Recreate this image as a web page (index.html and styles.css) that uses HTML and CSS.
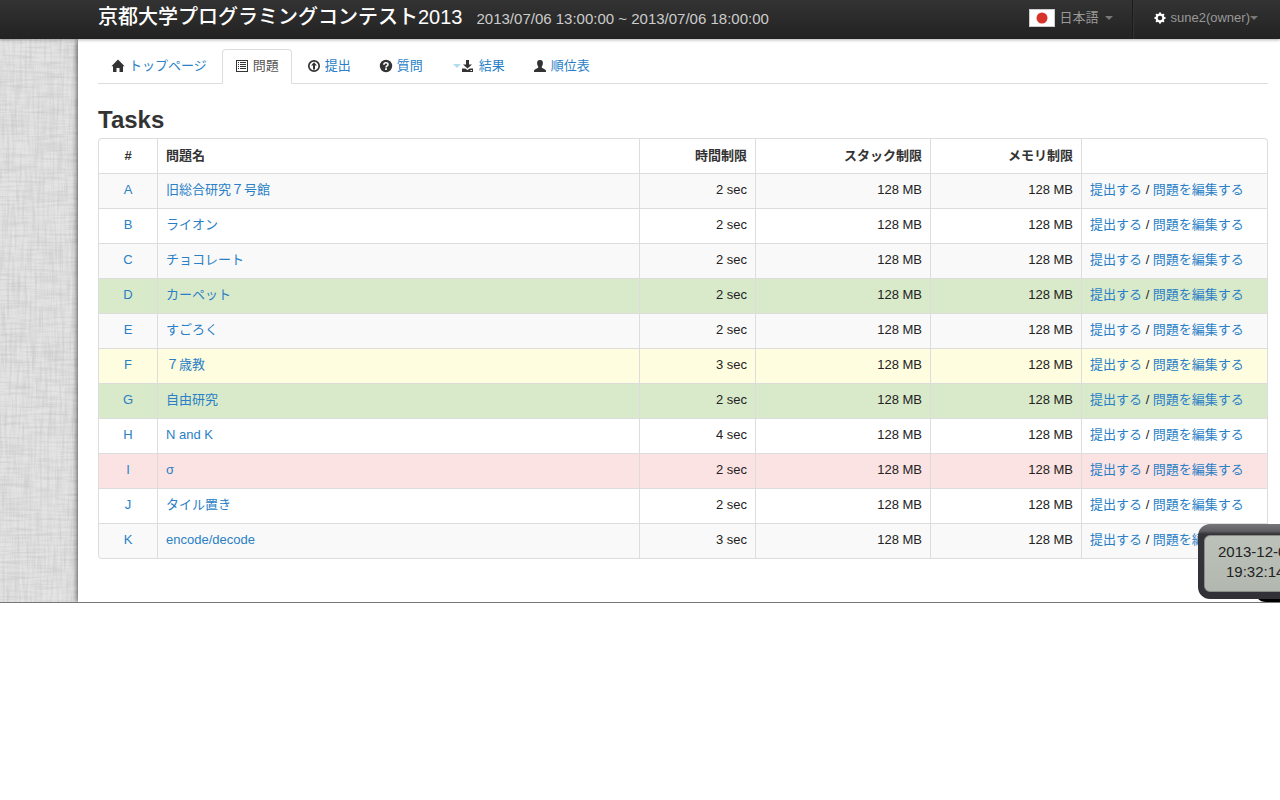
FILE: index.html
```html
<!DOCTYPE html>
<html lang="ja">
<head>
<meta charset="utf-8">
<title>京都大学プログラミングコンテスト2013</title>
<link rel="stylesheet" href="styles.css">
</head>
<body>
<header class="navbar">
  <a class="brand" href="#">京都大学プログラミングコンテスト2013</a>
  <span class="period">2013/07/06 13:00:00 ~ 2013/07/06 18:00:00</span>
  <nav class="user-nav">
    <a class="user-link" href="#"><svg class="flag" viewBox="0 0 26 18" aria-hidden="true"><rect x=".5" y=".5" width="25" height="17" fill="#fff" stroke="#ccc"/><circle cx="13" cy="9" r="5.5" fill="#d7332a"/></svg><span>日本語</span><i class="caret caret-spaced"></i></a>
    <a class="user-link user-account" href="#"><svg class="gear" viewBox="0 0 14 14" aria-hidden="true"><g fill="#fff"><path id="tooth" d="M6 1.500h2v2H6zM6 10.500h2v2H6zM1.500 6h2v2h-2zM10.500 6h2v2h-2z"/><use href="#tooth" transform="rotate(45 7 7)"/></g><circle cx="7" cy="7" r="3.400" fill="none" stroke="#fff" stroke-width="2.200"/></svg><span>sune2(owner)</span><i class="caret"></i></a>
  </nav>
</header>

<div class="page">
  <svg class="linen" aria-hidden="true">
    <filter id="horizontal" x="0" y="0" width="100%" height="100%"><feTurbulence type="fractalNoise" baseFrequency="0.03 0.4" numOctaves="3" seed="4"/><feColorMatrix values="0 0 0 0 0.5  0 0 0 0 0.5  0 0 0 0 0.5  0.9 0 0 0 -0.35"/></filter>
    <filter id="vertical" x="0" y="0" width="100%" height="100%"><feTurbulence type="fractalNoise" baseFrequency="0.4 0.03" numOctaves="3" seed="9"/><feColorMatrix values="0 0 0 0 0.5  0 0 0 0 0.5  0 0 0 0 0.5  0.9 0 0 0 -0.35"/></filter>
    <rect width="100%" height="100%" filter="url(#horizontal)"/>
    <rect width="100%" height="100%" filter="url(#vertical)"/>
  </svg>
  <main class="content">
    <nav class="tabs">
      <a class="tab" href="#"><svg class="icon" viewBox="0 0 14 14" aria-hidden="true"><path d="M7 .6 13.600 7.300H12V13H8.500V9H5.500v4H2V7.300H.4z"/></svg><span>トップページ</span></a>
      <a class="tab active" href="#"><svg class="icon" viewBox="0 0 14 14" aria-hidden="true"><path fill-rule="evenodd" d="M1 1h12v12H1zM2 2v10h10V2z"/><path d="M3 3h1v1H3zM5 3h6v1H5zM3 5h1v1H3zM5 5h6v1H5zM3 7h1v1H3zM5 7h6v1H5zM3 9h1v1H3zM5 9h6v1H5z"/></svg><span>問題</span></a>
      <a class="tab" href="#"><svg class="icon" viewBox="0 0 14 14" aria-hidden="true"><circle cx="7" cy="7" r="5.200" fill="none" stroke="#333" stroke-width="1.700"/><path d="M7 3.300 9.900 6.600H8V10.500H6V6.600H4.100z"/></svg><span>提出</span></a>
      <a class="tab" href="#"><svg class="icon" viewBox="0 0 14 14" aria-hidden="true"><circle cx="7" cy="7" r="6.200"/><path d="M4.900 5.700C4.900 3.100 9.100 3.200 9 5.500 9 6.900 7 6.800 7 8.400" fill="none" stroke="#fff" stroke-width="1.600"/><path d="M6.100 9.300h1.800v1.600H6.100z" fill="#fff"/></svg><span>質問</span></a>
      <a class="tab" href="#"><i class="caret caret-light"></i><svg class="icon" viewBox="0 0 14 14" aria-hidden="true"><path d="M5 1h3v4.500h3L6.500 9.500 2 5.500h3z"/><path fill-rule="evenodd" d="M1 9.500h3.200l2.300 1.500 2.300-1.500H12V13H1zM9.500 11v1h1.500v-1z"/></svg><span>結果</span></a>
      <a class="tab" href="#"><svg class="icon" viewBox="0 0 14 14" aria-hidden="true"><path d="M7 1C9.500 1 10 2.600 9.900 4.500 9.800 6.500 8.700 7.300 8.700 8.300 8.700 9.600 13 10 13 12v1H1v-1C1 10 5.300 9.600 5.300 8.300 5.300 7.300 4.200 6.500 4.100 4.500 4 2.600 4.500 1 7 1z"/></svg><span>順位表</span></a>
    </nav>

    <h1 class="heading">Tasks</h1>
    <table class="tasks">
      <colgroup><col class="col-id"><col><col class="col-time"><col class="col-stack"><col class="col-memory"><col class="col-actions"></colgroup>
      <thead>
        <tr><th class="center">#</th><th>問題名</th><th class="right">時間制限</th><th class="right">スタック制限</th><th class="right">メモリ制限</th><th></th></tr>
      </thead>
      <tbody>
        <tr><td class="center"><a href="#">A</a></td><td><a href="#">旧総合研究７号館</a></td><td class="right">2 sec</td><td class="right">128 MB</td><td class="right">128 MB</td><td><a href="#">提出する</a> / <a href="#">問題を編集する</a></td></tr>
        <tr><td class="center"><a href="#">B</a></td><td><a href="#">ライオン</a></td><td class="right">2 sec</td><td class="right">128 MB</td><td class="right">128 MB</td><td><a href="#">提出する</a> / <a href="#">問題を編集する</a></td></tr>
        <tr><td class="center"><a href="#">C</a></td><td><a href="#">チョコレート</a></td><td class="right">2 sec</td><td class="right">128 MB</td><td class="right">128 MB</td><td><a href="#">提出する</a> / <a href="#">問題を編集する</a></td></tr>
        <tr class="solved"><td class="center"><a href="#">D</a></td><td><a href="#">カーペット</a></td><td class="right">2 sec</td><td class="right">128 MB</td><td class="right">128 MB</td><td><a href="#">提出する</a> / <a href="#">問題を編集する</a></td></tr>
        <tr><td class="center"><a href="#">E</a></td><td><a href="#">すごろく</a></td><td class="right">2 sec</td><td class="right">128 MB</td><td class="right">128 MB</td><td><a href="#">提出する</a> / <a href="#">問題を編集する</a></td></tr>
        <tr class="partial"><td class="center"><a href="#">F</a></td><td><a href="#">７歳教</a></td><td class="right">3 sec</td><td class="right">128 MB</td><td class="right">128 MB</td><td><a href="#">提出する</a> / <a href="#">問題を編集する</a></td></tr>
        <tr class="solved"><td class="center"><a href="#">G</a></td><td><a href="#">自由研究</a></td><td class="right">2 sec</td><td class="right">128 MB</td><td class="right">128 MB</td><td><a href="#">提出する</a> / <a href="#">問題を編集する</a></td></tr>
        <tr><td class="center"><a href="#">H</a></td><td><a href="#">N and K</a></td><td class="right">4 sec</td><td class="right">128 MB</td><td class="right">128 MB</td><td><a href="#">提出する</a> / <a href="#">問題を編集する</a></td></tr>
        <tr class="failed"><td class="center"><a href="#">I</a></td><td><a href="#">σ</a></td><td class="right">2 sec</td><td class="right">128 MB</td><td class="right">128 MB</td><td><a href="#">提出する</a> / <a href="#">問題を編集する</a></td></tr>
        <tr><td class="center"><a href="#">J</a></td><td><a href="#">タイル置き</a></td><td class="right">2 sec</td><td class="right">128 MB</td><td class="right">128 MB</td><td><a href="#">提出する</a> / <a href="#">問題を編集する</a></td></tr>
        <tr><td class="center"><a href="#">K</a></td><td><a href="#">encode/decode</a></td><td class="right">3 sec</td><td class="right">128 MB</td><td class="right">128 MB</td><td><a href="#">提出する</a> / <a href="#">問題を編集する</a></td></tr>
      </tbody>
    </table>
  </main>
  <div class="clock"><div class="clock-face"><span>2013-12-0</span><span class="clock-time">19:32:14</span></div></div>
</div>
</body>
</html>
```

FILE: styles.css
```css
* {
  box-sizing: border-box;
}

body {
  margin: 0;
  background: #fff;
  color: #333;
  font: 13px/18px "Liberation Sans", "Noto Sans CJK JP", sans-serif;
}

a {
  color: #2a7fc6;
  text-decoration: none;
}

.navbar {
  position: relative;
  z-index: 1;
  display: flex;
  align-items: center;
  height: 39px;
  padding-left: 98px;
  background: linear-gradient(#333, #222);
  box-shadow: 0 1px 3px rgba(0, 0, 0, 0.3);
  white-space: nowrap;
}

.brand {
  padding-bottom: 6px;
  color: #fff;
  font-size: 20px;
  font-weight: 500;
  line-height: 24px;
}

.period {
  margin-left: 14px;
  padding-bottom: 2px;
  color: #ccc;
  font-size: 15px;
}

.user-nav {
  display: flex;
  align-self: stretch;
  margin-left: auto;
}

.user-link {
  display: flex;
  align-items: center;
  padding: 0 19px 3px 20px;
  color: #999;
}

.user-account {
  padding-right: 22px;
  border-left: 1px solid #1b1b1b;
  box-shadow: inset 1px 0 #333;
}

.flag {
  width: 26px;
  height: 18px;
  margin-right: 4px;
}

.gear {
  width: 14px;
  height: 14px;
  margin-right: 4px;
}

.caret {
  border: 4px solid transparent;
  border-top-color: #777;
  border-bottom: 0;
}

.caret-spaced {
  margin-left: 6px;
}

.caret-light {
  margin-left: 2px;
  border-top-color: #b3dcef;
}

.page {
  position: relative;
  display: flex;
  overflow: hidden;
  border-bottom: 1px solid #777;
  background: #e4e4e4;
  box-shadow: 0 1px #ddd;
}

.linen {
  position: absolute;
  top: 0;
  left: 0;
  width: 78px;
  height: 100%;
}

.content {
  position: relative;
  flex: 1;
  margin-left: 78px;
  padding: 10px 12px 43px 20px;
  background: #fff;
  box-shadow: 0 0 6px rgba(0, 0, 0, 0.8);
}

.tabs {
  display: flex;
  gap: 2px;
  margin-bottom: 20px;
  border-bottom: 1px solid #ddd;
}

.tab {
  display: flex;
  align-items: center;
  margin-bottom: -1px;
  padding: 7px 12px 8px;
  border: 1px solid transparent;
  border-radius: 4px 4px 0 0;
}

.tab.active {
  border-color: #ddd #ddd #fff;
  background: #fff;
  color: #555;
}

.icon {
  width: 14px;
  height: 14px;
  margin-right: 4px;
  fill: #333;
}

.heading {
  margin: 0 0 2px;
  font-size: 24px;
  line-height: 32px;
}

.tasks {
  width: 100%;
  border: solid #ddd;
  border-width: 1px 1px 1px 0;
  border-radius: 4px;
  border-spacing: 0;
  table-layout: fixed;
}

.col-id {
  width: 59px;
}

.col-time {
  width: 116px;
}

.col-stack {
  width: 175px;
}

.col-memory {
  width: 151px;
}

.col-actions {
  width: 186px;
}

th,
td {
  padding: 8px;
  border-left: 1px solid #ddd;
  text-align: left;
}

td {
  border-top: 1px solid #ddd;
  color: #222;
}

td {
  padding: 7px 8px 9px;
}

th:first-child {
  border-top-left-radius: 4px;
}

tr:last-child td:first-child {
  border-bottom-left-radius: 4px;
}

.center {
  text-align: center;
}

.right {
  text-align: right;
}

tbody tr:nth-child(odd) td {
  background: #f9f9f9;
}

tbody tr.solved td {
  background: #d9eaca;
}

tbody tr.partial td {
  background: #fffde0;
}

tbody tr.failed td {
  background: #fce3e3;
}

.clock {
  position: absolute;
  right: -34px;
  bottom: 3px;
  width: 116px;
  height: 75px;
  padding: 11px 6px 7px;
  border-radius: 12px;
  background: linear-gradient(#77777b, #606064 7px, #34343a 10px, #303036);
  box-shadow: 56px 3px #000;
}

.clock-face {
  display: flex;
  flex-direction: column;
  height: 100%;
  padding: 6px 0 0 13px;
  border: 1px solid #888d88;
  border-radius: 6px;
  background: linear-gradient(#bcc1ba, #b2b8b0);
  color: #222;
  font-size: 15px;
  line-height: 20px;
}

.clock-time {
  padding-left: 8px;
}
```
